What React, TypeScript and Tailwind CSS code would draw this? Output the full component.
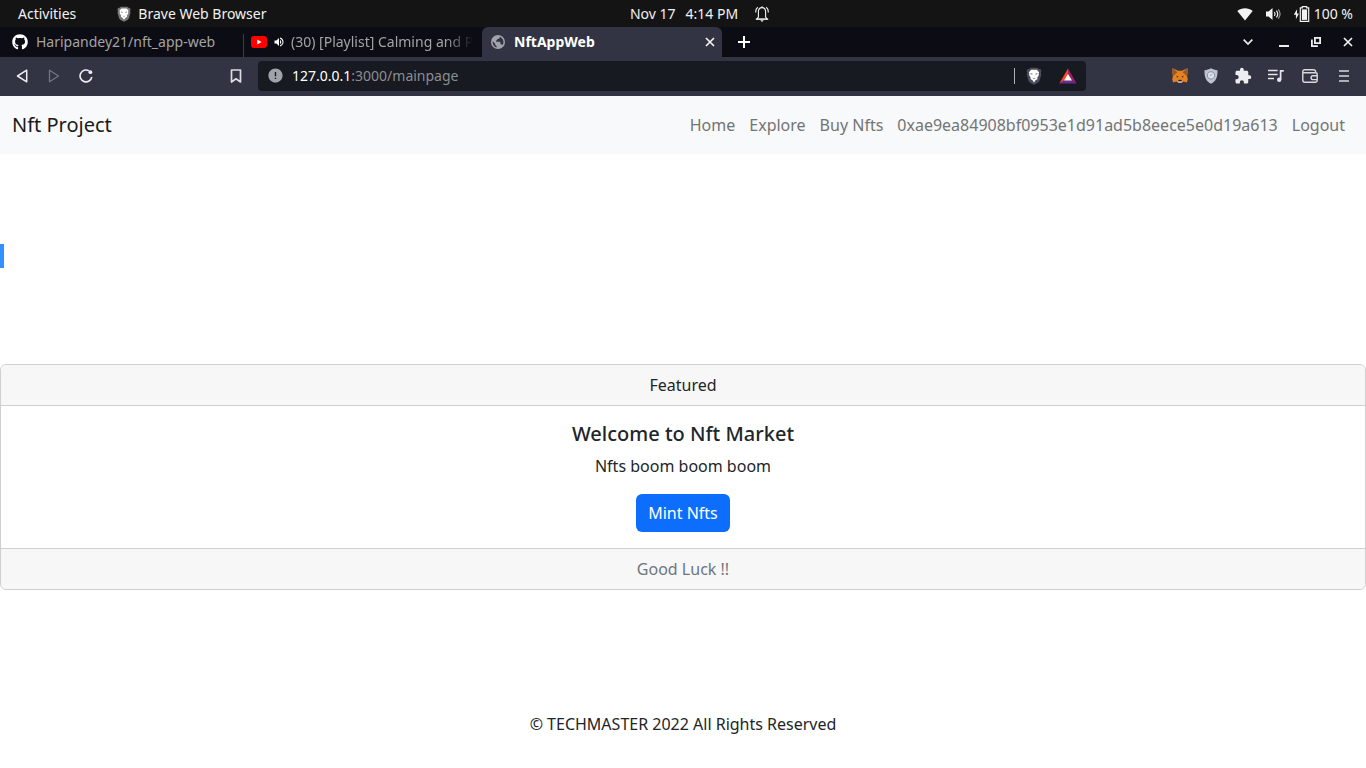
import React, { useState } from "react";
import { FaGithub } from "react-icons/fa";
import { MdExtension, MdError, MdVolumeUp } from "react-icons/md";

function BraveLion({ className, shield, mane }: { className: string; shield: string; mane: string }) {
  return (
    <svg viewBox="0 0 16 18" className={className} aria-hidden="true">
      <path d="M4.4 0.8h7.2l1.2 1.3 1.5-.2 1.2 2-.6 1.6.4 2.2-1.9 6.5-1.5 1.5L8 17.8l-3.9-2.1-1.5-1.5L.7 7.7l.4-2.2L.5 3.9l1.2-2 1.5.2z" fill={shield} />
      <path d="M5.2 2.8h5.600l2.300 2.400-.5 1.500.4 1.100-1.700 3 .2 1.400-1.800.9L8 15.400l-1.700-2.300-1.800-.9.2-1.400L3 7.800l.4-1.100-.5-1.500z" fill={mane} />
      <path d="M4.500 6.200l2.100.5-.3.800-1.500-.3zM11.500 6.200l-2.100.5.3.800 1.500-.3zM6.400 10.700L8 11.500l1.600-.8-.6.9L8 12.200l-1-.6z" fill={shield} />
    </svg>
  );
}

function GlobeIcon() {
  return (
    <svg viewBox="0 0 14 14" className="h-[14px] w-[14px]" aria-hidden="true">
      <circle cx="7" cy="7" r="7" fill="#a1a3aa" />
      <path d="M1.600 6.300l2.600 2.400v1.200l1.400 1v1.600C3 11.800 1.400 9.600 1.600 6.300zM8.600 1.700v1c0 .7-.6 1.200-1.300 1.200H6.200v1.200L5 5.700v1h3.400c.6 0 1 .5 1 1v1.600h.8c.6 0 1 .4 1.200.9 1.900-2.300 1.500-6.900-2.800-8.500z" fill="#323443" />
    </svg>
  );
}

function BellIcon() {
  return (
    <svg viewBox="0 0 16 18" className="h-[18px] w-4" fill="none" stroke="#f2f2f2" strokeWidth="1.1" aria-hidden="true">
      <path d="M4.4 12V6.8C4.4 4 5.700 2.600 8 2.600s3.600 1.400 3.600 4.200V12l1.600 2H2.800z" />
      <path d="M8 2.600V1.200M3.800 2.200C2.400 3.200 1.600 5 1.700 7.400M12.200 2.200c1.400 1 2.200 2.800 2.100 5.200" />
      <path d="M1.800 14.200h12.400" />
      <path d="M6.200 15.200h3.600L8 17z" fill="#f2f2f2" stroke="none" />
    </svg>
  );
}

function WifiIcon() {
  return (
    <svg viewBox="0 0 16 14" className="h-[14px] w-4" aria-hidden="true">
      <path d="M.3 4C4.700.2 11.300.2 15.700 4L8 13.500z" fill="#f2f2f2" />
    </svg>
  );
}

function SpeakerIcon() {
  return (
    <svg viewBox="0 0 16 16" className="h-4 w-4" fill="none" stroke="#f2f2f2" strokeWidth="1.200" aria-hidden="true">
      <path d="M1 5.500h2.500L7.500 2v12l-4-3.500H1z" fill="#f2f2f2" stroke="none" />
      <path d="M9.400 6c.9 1.200.9 2.800 0 4M11.400 4.600c1.600 2 1.600 4.800 0 6.800" />
      <path d="M13.300 3.400c2.100 2.700 2.100 6.500 0 9.200" stroke="#999" />
    </svg>
  );
}

function BatteryIcon() {
  return (
    <svg viewBox="0 0 17 16" className="h-4 w-[17px]" aria-hidden="true">
      <path d="M4 3.200L.8 8.800h2.100v4.400l3-5.700H4z" fill="#f2f2f2" />
      <path d="M9.300 1.800V.6h4.400v1.200h2v13.600H7.300V1.800z" fill="none" stroke="#f2f2f2" strokeWidth="1.200" />
      <path d="M8.900 3.400h5.200v10.500H8.900z" fill="#f2f2f2" />
    </svg>
  );
}

function YoutubeIcon() {
  return (
    <svg viewBox="0 0 16 12" className="h-3 w-4 shrink-0" aria-hidden="true">
      <rect width="16" height="12" rx="3" fill="#f00" />
      <path d="M6.200 3.500v5l4.400-2.500z" fill="#fff" />
    </svg>
  );
}

function CloseIcon() {
  return (
    <svg viewBox="0 0 10 10" className="h-[10px] w-[10px]" stroke="#f2f2f2" strokeWidth="1.700" aria-hidden="true">
      <path d="M1 1l8 8M9 1L1 9" />
    </svg>
  );
}

function MetamaskIcon() {
  return (
    <svg viewBox="0 0 16 15" className="h-[15px] w-4" aria-hidden="true">
      <path d="M.5.300l5.600 2.500h3.800L15.500.300l.4 3.600-.9 4.200.8 3.300-1 3-3.200-.8-1.900 1.200H6.300l-1.900-1.200-3.200.8-1-3 .8-3.300L.1 3.900z" fill="#e8821e" />
      <path d="M.5.300l4.900 3.900L1 8.100.1 3.900zM15.500.300l-4.900 3.900L15 8.100l.9-4.200z" fill="#8e5a30" />
      <path d="M4.700 7.500l2 1.400-1.900.7zM11.300 7.500l-2 1.400 1.900.7z" fill="#233447" />
      <path d="M5.400 13.400l1-1.700h3.200l1 1.700-1.200 1.300H6.600z" fill="#d5bfb2" />
      <path d="M6.400 11.800h3.200l.3 1.400H6.100z" fill="#28221f" />
    </svg>
  );
}

function PrivacyShieldIcon() {
  return (
    <svg viewBox="0 0 14 16" className="h-4 w-[14px]" aria-hidden="true">
      <path d="M7 .3c2 1.200 4 1.800 6.500 1.900C13.800 8.600 12 13.300 7 15.800 2 13.300.2 8.600.5 2.200 3 2.100 5 1.500 7 .3z" fill="#bcc3d2" />
      <circle cx="7" cy="7.400" r="3.600" fill="#dfe4ee" stroke="#8c94aa" strokeWidth="1.100" />
      <path d="M5.400 8.500c0-2 1.500-3 3.200-3 0 1.900-1.200 3.300-3.200 3z" fill="#b4bccd" />
    </svg>
  );
}

function PlaylistIcon() {
  return (
    <svg viewBox="0 0 16 14" className="h-[14px] w-4" aria-hidden="true">
      <path d="M0 1.500h9.600M0 5.500h9.600M0 9.500h6" stroke="#e6e6ea" strokeWidth="1.700" />
      <path d="M12.600 10.500V1.800h3.200" fill="none" stroke="#e6e6ea" strokeWidth="1.700" />
      <circle cx="11.200" cy="10.800" r="2.200" fill="#e6e6ea" />
    </svg>
  );
}

function WalletIcon() {
  return (
    <svg viewBox="0 0 16 14" className="h-[14px] w-4" fill="none" stroke="#d8d8dd" strokeWidth="1.400" aria-hidden="true">
      <path d="M13.600 3.800V2.800c0-1.200-.8-2-2-2H2.800c-1.200 0-2 .8-2 2v8.200c0 1.300.8 2.200 2 2.200h10.200c1.300 0 2.200-.8 2.200-2.200V5.300c0-.9-.6-1.500-1.500-1.500H1.200" />
      <path d="M15 6.800h-4a1.900 1.900 0 000 3.800h4" />
    </svg>
  );
}

function SystemBar() {
  return (
    <header className="grid h-[27px] grid-cols-[1fr_auto_1fr] items-center bg-[#141414] text-sm text-[#f2f2f2]">
      <div className="flex items-center pl-[18px]">
        <button type="button">Activities</button>
        <button type="button" className="ml-10 flex items-center gap-[6px]">
          <BraveLion className="h-4 w-4" shield="#77777a" mane="#fff" />
          Brave Web Browser
        </button>
      </div>
      <button type="button" className="flex items-center gap-[10px] pl-[34px]">
        <time>Nov 17</time>
        <time>4:14 PM</time>
        <span className="pl-[6px]"><BellIcon /></span>
      </button>
      <button type="button" aria-label="System status" className="flex items-center gap-3 justify-self-end pr-[13px]">
        <WifiIcon />
        <SpeakerIcon />
        <span className="flex items-center gap-1">
          <BatteryIcon />
          100 %
        </span>
      </button>
    </header>
  );
}

function TabBar() {
  return (
    <div className="flex h-[30px] items-center bg-[#0c0c14] text-sm">
      <button type="button" className="flex w-[243px] items-center gap-2 pl-3 text-[#a3a3a5]">
        <FaGithub className="h-4 w-4 shrink-0 text-white" />
        <span className="whitespace-nowrap">Haripandey21/nft_app-web</span>
      </button>
      <div className="h-[23px] w-px self-end bg-[#3c3c44]" />
      <button type="button" className="flex w-[238px] items-center pl-[7px] text-[#a3a3a5]">
        <YoutubeIcon />
        <MdVolumeUp className="mx-[6px] h-3 w-3 shrink-0 text-white" />
        <span className="whitespace-nowrap mask-r-from-85%">(30) [Playlist] Calming and P</span>
      </button>
      <div className="flex h-full w-[240px] items-center rounded-t-md bg-[#323443] pl-[9px] pr-[7px]">
        <button type="button" className="flex flex-1 items-center gap-[9px] font-bold text-white">
          <GlobeIcon />
          NftAppWeb
        </button>
        <button type="button" aria-label="Close tab"><CloseIcon /></button>
      </div>
      <button type="button" aria-label="New tab" className="ml-4">
        <svg viewBox="0 0 12 12" className="h-3 w-3" stroke="#fff" strokeWidth="2"><path d="M6 0v12M0 6h12" /></svg>
      </button>
      <div className="ml-auto flex items-center gap-[22px] pr-[13px]">
        <button type="button" aria-label="Search tabs" className="mr-1">
          <svg viewBox="0 0 10 6" className="h-[6px] w-[10px]" fill="none" stroke="#eee" strokeWidth="1.700"><path d="M.7.700L5 5 9.300.700" /></svg>
        </button>
        <button type="button" aria-label="Minimize">
          <svg viewBox="0 0 10 10" className="h-[10px] w-[10px]"><path d="M0 8h10v2H0z" fill="#eee" /></svg>
        </button>
        <button type="button" aria-label="Restore">
          <svg viewBox="0 0 10 10" className="h-[10px] w-[10px]" fill="none" stroke="#eee" strokeWidth="1.800"><path d="M3.900.9h5.200v5.200H3.900zM.9 2.500v6.600h6" /></svg>
        </button>
        <button type="button" aria-label="Close window"><CloseIcon /></button>
      </div>
    </div>
  );
}

function Toolbar() {
  const [path, setPath] = useState(":3000/mainpage");
  return (
    <div className="flex h-[39px] items-center bg-[#323443] pb-[2px]">
      <div className="flex w-[258px] items-center pl-4">
        <button type="button" aria-label="Back">
          <svg viewBox="0 0 12 14" className="h-[14px] w-3" fill="none" stroke="#ededf0" strokeWidth="1.500" strokeLinejoin="round"><path d="M10.700 1.200v11.600L1.500 7z" /></svg>
        </button>
        <button type="button" aria-label="Forward" className="ml-5">
          <svg viewBox="0 0 12 14" className="h-[14px] w-3" fill="none" stroke="#74757f" strokeWidth="1.300" strokeLinejoin="round"><path d="M1.500 1.200v11.600L10.500 7z" /></svg>
        </button>
        <button type="button" aria-label="Reload" className="ml-[19px]">
          <svg viewBox="0 0 14 14" className="h-[14px] w-[14px]" fill="none" stroke="#ededf0" strokeWidth="1.600"><path d="M10 1.900A5.900 5.900 0 1 0 12.800 8" /><circle cx="11.400" cy="3.200" r="1.900" fill="#ededf0" stroke="none" /></svg>
        </button>
        <button type="button" aria-label="Bookmark this page" className="ml-auto mr-4">
          <svg viewBox="0 0 12 14" className="h-[14px] w-3" fill="none" stroke="#dcdce0" strokeWidth="1.700" strokeLinejoin="round"><path d="M1.500 1h9v12L6 9.800 1.500 13z" /></svg>
        </button>
      </div>
      <form className="flex h-[30px] min-w-0 flex-1 items-center rounded bg-[#171a21] pl-[9px] pr-[9px] text-sm" onSubmit={(e) => e.preventDefault()}>
        <MdError className="mr-2 h-[17px] w-[17px] shrink-0 text-[#a1a3aa]" />
        <label htmlFor="address" className="text-white">127.0.0.1</label>
        <input
          id="address"
          value={path}
          onChange={(e: React.ChangeEvent<HTMLInputElement>) => setPath(e.target.value)}
          className="min-w-0 flex-1 bg-transparent text-[#8b8d92] outline-none"
        />
        <div className="mr-[11px] h-4 w-px bg-[#b0b1b5]" />
        <button type="button" aria-label="Brave Shields"><BraveLion className="h-[18px] w-4" shield="#4b4d5d" mane="#fff" /></button>
        <button type="button" aria-label="Brave Rewards" className="ml-[17px]">
          <svg viewBox="0 0 18 16" className="h-4 w-[18px]"><path d="M9 .5L.3 15.500 9 10z" fill="#ff4724" /><path d="M9 .5l8.700 15L9 10z" fill="#9e1f63" /><path d="M.3 15.500h17.400L9 10z" fill="#662d91" /><path d="M9 6l4 6.500H5z" fill="#fff" /></svg>
        </button>
      </form>
      <div className="flex items-center gap-4 pl-[86px] pr-[17px]">
        <button type="button" aria-label="MetaMask"><MetamaskIcon /></button>
        <button type="button" aria-label="Privacy extension"><PrivacyShieldIcon /></button>
        <button type="button" aria-label="Extensions"><MdExtension className="h-[18px] w-[18px] text-[#ededf0]" /></button>
        <button type="button" aria-label="Playlist"><PlaylistIcon /></button>
        <button type="button" aria-label="Wallet" className="ml-[2px]"><WalletIcon /></button>
        <button type="button" aria-label="Menu" className="ml-[5px]">
          <svg viewBox="0 0 10 12" className="h-3 w-[10px]" stroke="#d8d8dd" strokeWidth="1.700"><path d="M0 1h10M0 6h10M0 11h10" /></svg>
        </button>
      </div>
    </div>
  );
}

function SiteNav() {
  return (
    <nav className="flex h-[58px] items-center justify-between bg-[#f8f9fa] pl-3 pr-[21px]">
      <a href="#home" className="text-xl text-[#1a1a1a]">Nft Project</a>
      <div className="flex items-center gap-[14px] text-[#737474]">
        <a href="#home">Home</a>
        <a href="#explore">Explore</a>
        <a href="#buy">Buy Nfts</a>
        <a href="#account">0xae9ea84908bf0953e1d91ad5b8eece5e0d19a613</a>
        <button type="button">Logout</button>
      </div>
    </nav>
  );
}

export default function App() {
  return (
    <div className="flex min-h-screen flex-col bg-white font-['Noto_Sans',sans-serif] text-base text-[#212529]">
      <SystemBar />
      <TabBar />
      <Toolbar />
      <SiteNav />
      <main className="pt-[90px]">
        <div className="h-6 w-1 bg-[#3390ff]" />
        <section className="mt-24 rounded-md border border-[#cfcfcf] text-center">
          <div className="rounded-t-md border-b border-[#cfcfcf] bg-[#f7f7f7] py-2">Featured</div>
          <div className="p-4">
            <h5 className="mb-2 text-xl leading-6 font-medium">Welcome to Nft Market</h5>
            <p className="mb-4">Nfts boom boom boom</p>
            <button type="button" className="h-[38px] rounded-md bg-[#0d6efd] px-3 text-white">Mint Nfts</button>
          </div>
          <div className="rounded-b-md border-t border-[#cfcfcf] bg-[#f7f7f7] py-2 text-[#6c757d]">Good Luck !!</div>
        </section>
      </main>
      <footer className="mt-auto pb-8 text-center">© TECHMASTER 2022 All Rights Reserved</footer>
    </div>
  );
}
